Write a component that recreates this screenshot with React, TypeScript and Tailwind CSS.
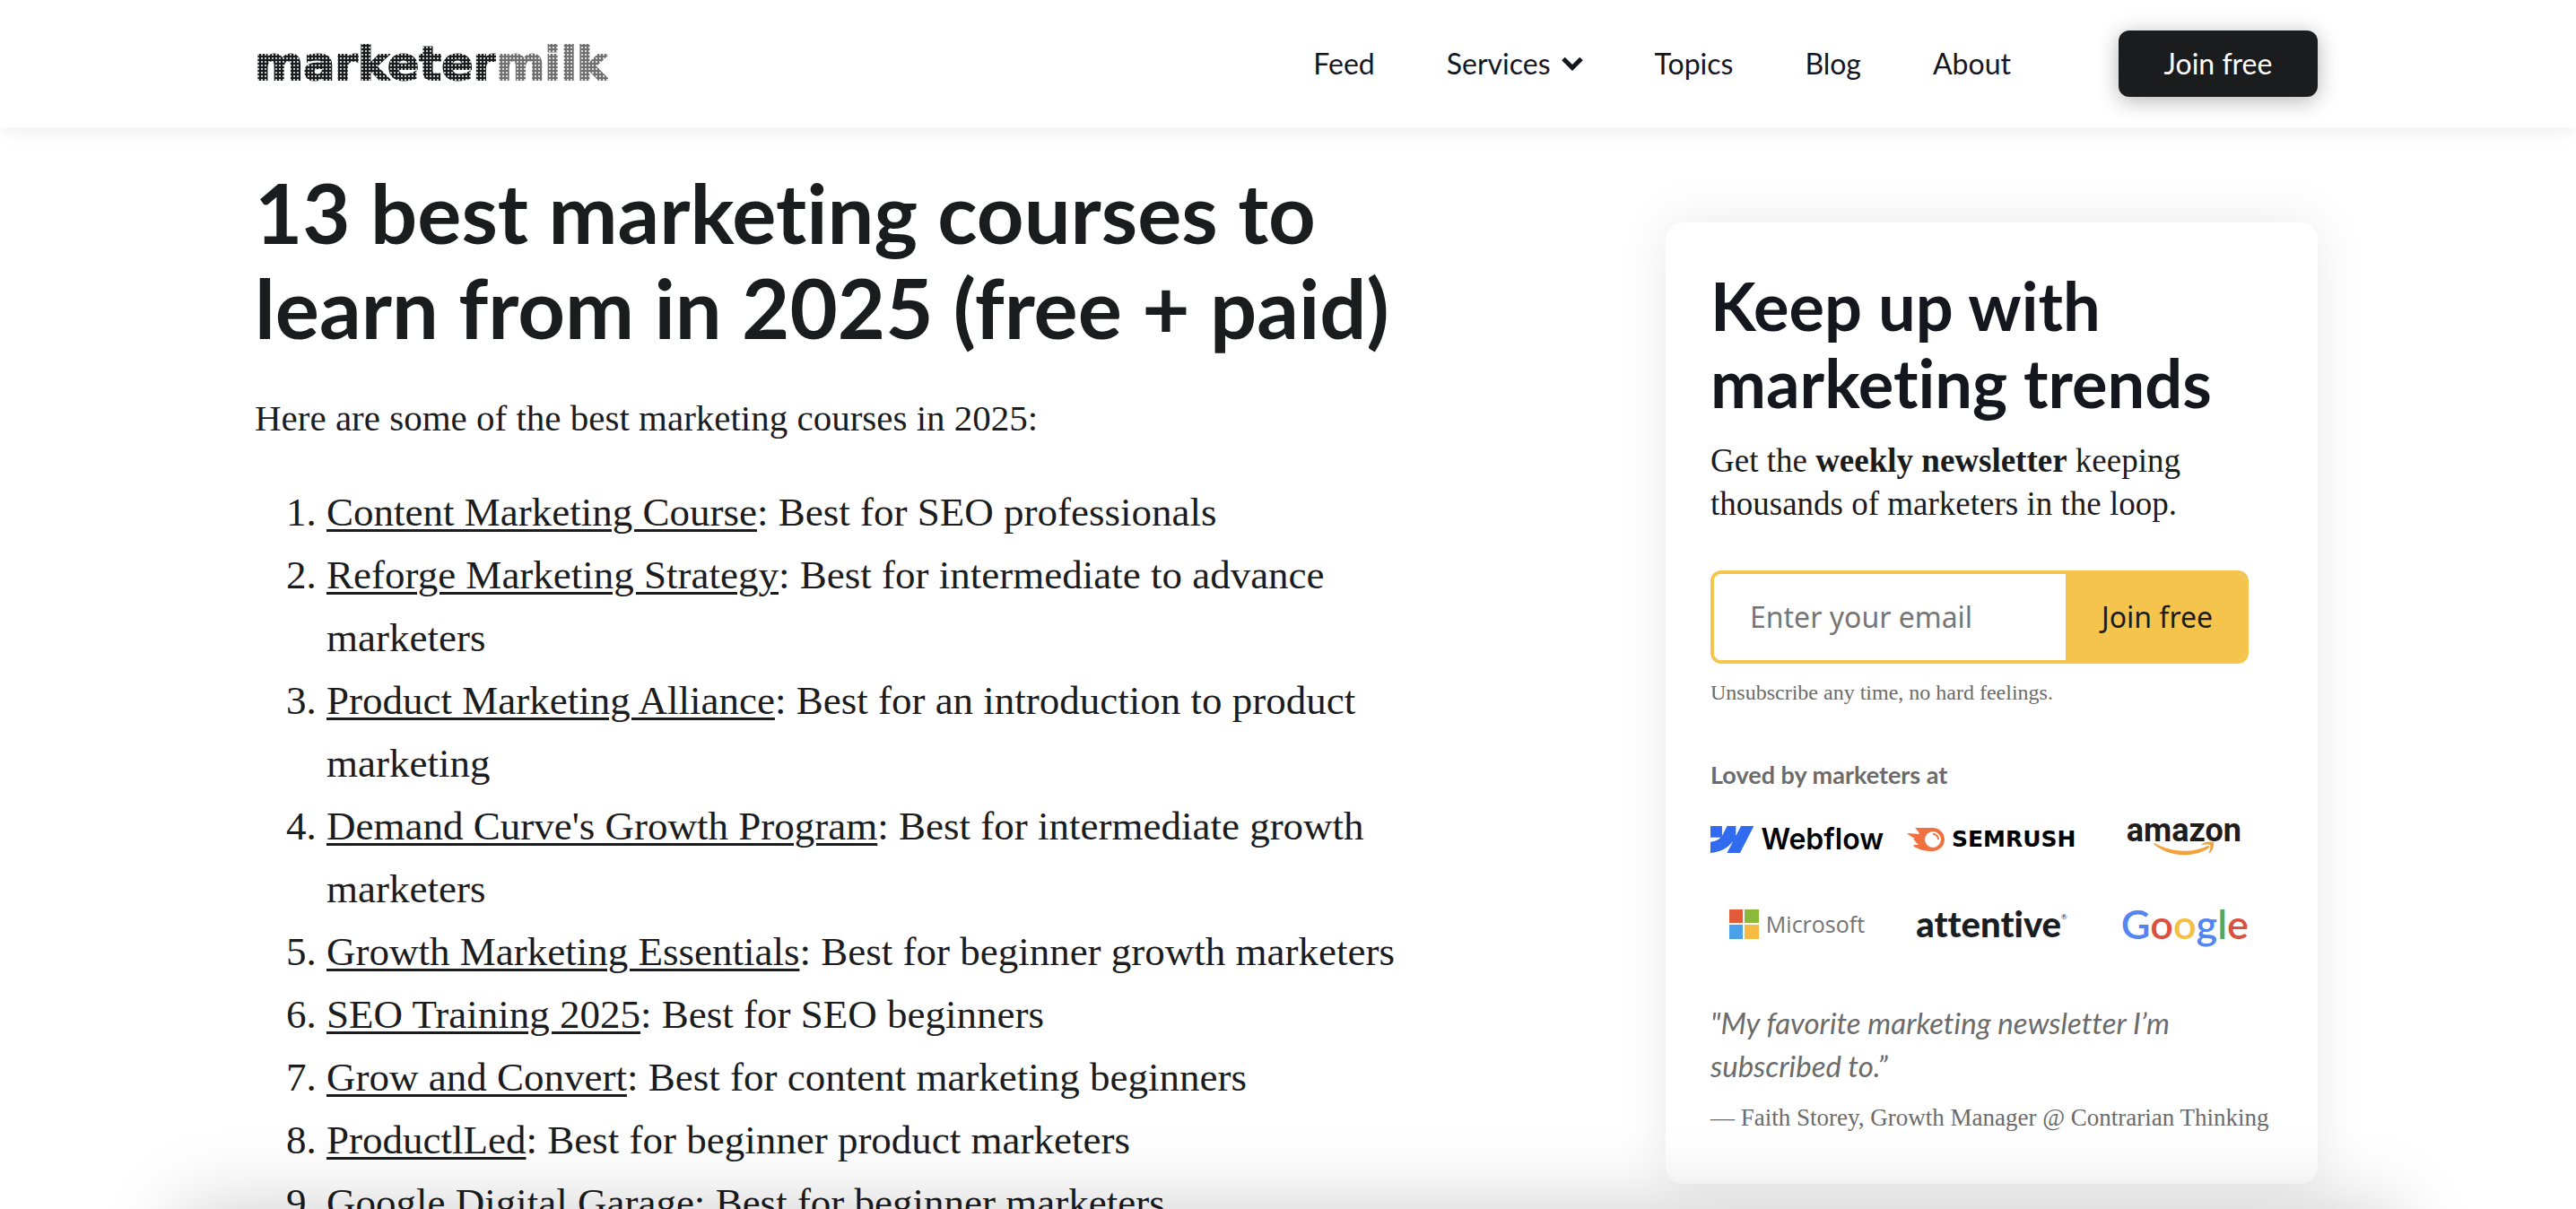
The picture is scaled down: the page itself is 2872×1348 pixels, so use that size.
const courses = [
    { name: "Content Marketing Course", note: "Best for SEO professionals" },
    { name: "Reforge Marketing Strategy", note: "Best for intermediate to advance marketers" },
    { name: "Product Marketing Alliance", note: "Best for an introduction to product marketing" },
    { name: "Demand Curve's Growth Program", note: "Best for intermediate growth marketers" },
    { name: "Growth Marketing Essentials", note: "Best for beginner growth marketers" },
    { name: "SEO Training 2025", note: "Best for SEO beginners" },
    { name: "Grow and Convert", note: "Best for content marketing beginners" },
    { name: "ProductlLed", note: "Best for beginner product marketers" },
    { name: "Google Digital Garage", note: "Best for beginner marketers" },
]

function Header() {
    return (
        <header className="relative z-10 bg-white shadow-[0_4px_20px_rgba(0,0,0,0.07)]">
            <div className="flex h-[142px] items-center justify-between pl-[284px] pr-[288px]">
                <a
                    href="#"
                    className="font-['DejaVu_Sans',sans-serif] text-[52px] leading-[60px] font-bold text-transparent [-webkit-text-stroke:2px_transparent]"
                >
                    <span className="bg-[radial-gradient(circle,#1b1c1e_60%,transparent_80%)] bg-[length:4px_4px] bg-clip-text">marketer</span>
                    <span className="bg-[radial-gradient(circle,#6f6f6f_60%,transparent_80%)] bg-[length:4px_4px] bg-clip-text">milk</span>
                </a>

                <nav className="flex items-center gap-20 text-[32px] leading-10 text-[#16161f]">
                    <a href="#">Feed</a>
                    <button type="button" className="flex items-center gap-3">
                        Services
                        <svg viewBox="0 0 24 16" className="h-4 w-6" fill="none" stroke="currentColor" strokeWidth="5">
                            <path d="M2 2.5l10 10 10-10" />
                        </svg>
                    </button>
                    <a href="#">Topics</a>
                    <a href="#">Blog</a>
                    <a href="#">About</a>
                    <button
                        type="button"
                        className="ml-10 h-[74px] w-[222px] rounded-xl bg-[#1b1c1e] text-white shadow-[0_4px_24px_rgba(0,0,0,0.3)]"
                    >
                        Join free
                    </button>
                </nav>
            </div>
        </header>
    )
}

function Article() {
    return (
        <article className="max-w-[1300px] flex-1 pt-[42px]">
            <h1 className="text-[92px] leading-[106px] font-bold">
                13 best marketing courses to learn from in 2025 (free + paid)
            </h1>
            <p className="mt-10 font-['Liberation_Serif',serif] text-[41px] leading-[60px]">
                Here are some of the best marketing courses in 2025:
            </p>
            <ol className="mt-10 list-decimal pl-20 font-['Liberation_Serif',serif] text-[45px] leading-[70px]">
                {courses.map((course) => (
                    <li key={course.name}>
                        <a href="#" className="underline decoration-[3px] underline-offset-4">{course.name}</a>: {course.note}
                    </li>
                ))}
            </ol>
        </article>
    )
}

function WebflowLogo() {
    return (
        <div className="flex items-center gap-2">
            <svg viewBox="0 4.5 24 15" className="h-8 w-[51px]" fill="#316cf0">
                <path d="m24 4.515-7.658 14.97H9.149l3.205-6.204h-.144C9.566 16.713 5.621 18.973 0 19.485v-6.118s3.596-.213 5.71-2.435H0V4.515h6.417v5.278l.144-.001 2.622-5.277h4.854v5.244h.144l2.72-5.244H24Z" />
            </svg>
            <span className="font-['Inter',sans-serif] text-[32px] leading-10 font-semibold text-black">Webflow</span>
        </div>
    )
}

function SemrushLogo() {
    return (
        <div className="flex items-center gap-2">
            <svg viewBox="0 0 42 26" className="h-[26px] w-[42px]" fill="#f0703f">
                <path
                    fillRule="evenodd"
                    d="M9 0h20c7 0 13 6 13 13s-6 13-14 13C20 26 13 24 8 21c-1-1-1-2 1-2h4c-2-2-4-4-6-7h2C5 10 2 8 0 6c5 0 10 1 14 1-1-3-3-5-5-7zM29 4a9 9 0 100 18 9 9 0 000-18z"
                />
                <path d="M29 6c4 0 7 3 7 7h-2c0-3-2-5-5-5z" />
            </svg>
            <span className="font-['DejaVu_Sans',sans-serif] text-[25px] leading-10 font-bold text-black">SEMRUSH</span>
        </div>
    )
}

function AmazonLogo() {
    return (
        <div className="flex flex-col items-center pb-1">
            <span className="font-['Roboto',sans-serif] text-[36px] leading-6 font-bold text-[#1f1d1b]">amazon</span>
            <svg viewBox="0 0 68 16" className="h-4 w-[68px]" fill="#f2a23a">
                <path d="M1 2c18 10 41 12 60 3 1 0 2 1 1 2C46 19 17 18 0 3z" />
                <path d="M54 3c4-3 10-3 13-2 1 3-1 9-4 12-1 0-2 0-1-1 1-3 2-6 1-8-2-1-5-1-8 0-1 0-2 0-1-1z" />
            </svg>
        </div>
    )
}

function MicrosoftLogo() {
    return (
        <div className="flex items-center gap-2">
            <svg viewBox="0 0 33 33" className="size-[33px]">
                <path d="M0 0h15v15H0z" fill="#e25c3a" />
                <path d="M17 0h16v15H17z" fill="#8db93a" />
                <path d="M0 17h15v16H0z" fill="#4aa1ea" />
                <path d="M17 17h16v16H17z" fill="#f6bb42" />
            </svg>
            <span className="font-['Open_Sans',sans-serif] text-[25px] leading-10 font-medium text-[#737373]">Microsoft</span>
        </div>
    )
}

function AttentiveLogo() {
    return (
        <div className="flex items-start text-[#1a1d22]">
            <span className="text-[40px] leading-10 font-black">attentive</span>
            <span className="text-[8px] leading-6">®</span>
        </div>
    )
}

function GoogleLogo() {
    return (
        <div className="text-[45px] leading-[48px] font-semibold">
            <span className="text-[#5585f0]">G</span>
            <span className="text-[#db5040]">o</span>
            <span className="text-[#f3c041]">o</span>
            <span className="text-[#5585f0]">g</span>
            <span className="text-[#58a55c]">l</span>
            <span className="text-[#db5040]">e</span>
        </div>
    )
}

function NewsletterCard() {
    return (
        <aside className="mt-[106px] w-[727px] rounded-[20px] bg-white px-[50px] pt-[50px] pb-[54px] shadow-[0_0_60px_rgba(0,0,0,0.09)]">
            <h2 className="text-[74px] leading-[86px] font-bold text-[#16161f]">Keep up with marketing trends</h2>
            <p className="mt-5 w-[600px] font-['Liberation_Serif',serif] text-[37px] leading-[48px]">
                Get the <strong>weekly newsletter</strong> keeping thousands of marketers in the loop.
            </p>

            <form className="mt-[50px] flex h-[104px] w-[600px] overflow-hidden rounded-xl border-4 border-[#f4c44c] font-['Noto_Sans',sans-serif] text-[32px]">
                <input
                    type="email"
                    aria-label="Email"
                    placeholder="Enter your email"
                    className="min-w-0 flex-1 bg-white pl-10 outline-none placeholder:text-[#757575]"
                />
                <button type="button" className="w-[200px] bg-[#f4c44c] pl-1">Join free</button>
            </form>
            <p className="mt-4 font-['Liberation_Serif',serif] text-2xl leading-8 text-[#6b6b6b]">
                Unsubscribe any time, no hard feelings.
            </p>

            <h3 className="mt-[60px] text-[27px] leading-8 font-bold text-[#6b6b6b]">Loved by marketers at</h3>
            <div className="mt-[34px] grid w-[600px] grid-cols-[193px_189px_1fr] items-center gap-x-[26px] gap-y-12">
                <WebflowLogo />
                <SemrushLogo />
                <div className="justify-self-end pr-2"><AmazonLogo /></div>
                <div className="justify-self-center"><MicrosoftLogo /></div>
                <div className="justify-self-center"><AttentiveLogo /></div>
                <div className="justify-self-end"><GoogleLogo /></div>
            </div>

            <blockquote className="mt-[62px] w-[560px] text-[33px] leading-[48px] text-[#6b6b6b] italic">
                "My favorite marketing newsletter I’m subscribed to.”
            </blockquote>
            <p className="mt-3.5 font-['Liberation_Serif',serif] text-[27px] leading-10 whitespace-nowrap text-[#6b6b6b]">
                — Faith Storey, Growth Manager @ Contrarian Thinking
            </p>
        </aside>
    )
}

function App() {
    return (
        <div className="h-screen overflow-hidden bg-white font-['Lato',sans-serif] text-[#1b1c1e] [font-variant-ligatures:none]">
            <Header />
            <main className="flex items-start justify-between pl-[284px] pr-[288px]">
                <Article />
                <NewsletterCard />
            </main>
            <div className="pointer-events-none fixed inset-x-[200px] top-full z-20 h-40 shadow-[0_0_90px_rgba(0,0,0,0.2)]" />
        </div>
    )
}

export default App;
